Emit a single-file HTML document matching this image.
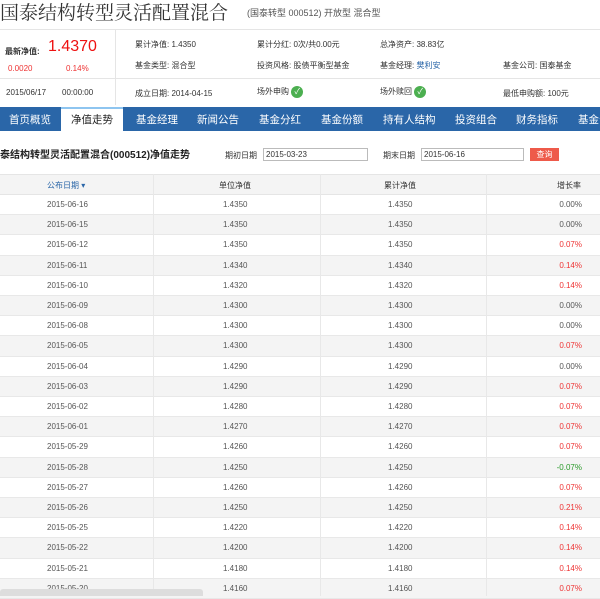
<!DOCTYPE html><html><head><meta charset="utf-8"><style>
*{margin:0;padding:0;box-sizing:border-box}
body{width:600px;height:596px;overflow:hidden;background:#fff;font-family:"Liberation Sans","Noto Sans CJK SC",sans-serif;font-size:8px;color:#333;position:relative}
.a{position:absolute;white-space:nowrap}
.nav{position:absolute;top:107px;left:0;width:600px;height:24px;background:#2a66a8;overflow:hidden}
.nav span{position:absolute;top:5px;color:#fff;font-size:10.5px;white-space:nowrap}
.row{position:absolute;left:0;width:600px;height:20.2px;border-bottom:1px solid #e8e8e8;font-size:8px;color:#555}
.row span{position:absolute;top:5px}
.g{background:#f4f4f4}
.chk{display:inline-block;width:12px;height:12px;border-radius:50%;background:#4caf50;color:#fff;font-size:8px;text-align:center;line-height:12px;vertical-align:middle}
</style></head><body>
<div class="a" style="left:0;top:-2px;font-size:19px;color:#333;font-family:'Noto Serif CJK SC',serif">国泰结构转型灵活配置混合</div>
<div class="a" style="left:247px;top:6px;font-size:9px;color:#555">(国泰转型 000512) 开放型 混合型</div>
<div class="a" style="left:0;top:29px;width:600px;height:1px;background:#e5e5e5"></div>
<div class="a" style="left:0;top:78px;width:600px;height:1px;background:#e5e5e5"></div>
<div class="a" style="left:115px;top:29px;width:1px;height:76px;background:#e5e5e5"></div>
<div class="a" style="left:5px;top:46px;font-size:8px;font-weight:bold">最新净值:</div>
<div class="a" style="left:48px;top:38px;font-size:16px;color:#e11">1.4370</div>
<div class="a" style="left:8px;top:64px;color:#e33">0.0020</div>
<div class="a" style="left:66px;top:64px;color:#e33">0.14%</div>
<div class="a" style="left:135px;top:39px">累计净值: 1.4350</div>
<div class="a" style="left:257px;top:39px">累计分红: 0次/共0.00元</div>
<div class="a" style="left:380px;top:39px">总净资产: 38.83亿</div>
<div class="a" style="left:135px;top:60px">基金类型: 混合型</div>
<div class="a" style="left:257px;top:60px">投资风格: 股债平衡型基金</div>
<div class="a" style="left:380px;top:60px">基金经理: <span style="color:#2a66a8">樊利安</span></div>
<div class="a" style="left:503px;top:60px">基金公司: 国泰基金</div>
<div class="a" style="left:6px;top:88px">2015/06/17</div>
<div class="a" style="left:62px;top:88px">00:00:00</div>
<div class="a" style="left:135px;top:88px">成立日期: 2014-04-15</div>
<div class="a" style="left:257px;top:86px">场外申购 <span class="chk">✓</span></div>
<div class="a" style="left:380px;top:86px">场外赎回 <span class="chk">✓</span></div>
<div class="a" style="left:503px;top:88px">最低申购额: 100元</div>
<div class="nav">
<span style="left:9px">首页概览</span>
<div class="a" style="left:61px;top:0;width:62px;height:24px;background:#fff;border-top:2px solid #8ec5f0"></div>
<span style="left:71px;color:#222">净值走势</span>
<span style="left:136px">基金经理</span><span style="left:197px">新闻公告</span><span style="left:259px">基金分红</span><span style="left:321px">基金份额</span><span style="left:383px">持有人结构</span><span style="left:455px">投资组合</span><span style="left:516px">财务指标</span><span style="left:578px">基金公司</span>
</div>
<div class="a" style="left:0;top:146px;font-size:10px;font-weight:bold;color:#222">泰结构转型灵活配置混合(000512)净值走势</div>
<div class="a" style="left:225px;top:150px">期初日期</div>
<div class="a" style="left:263px;top:148px;width:105px;height:13px;border:1px solid #bbb;padding:1px 2px">2015-03-23</div>
<div class="a" style="left:383px;top:150px">期末日期</div>
<div class="a" style="left:421px;top:148px;width:103px;height:13px;border:1px solid #bbb;padding:1px 2px">2015-06-16</div>
<div class="a" style="left:530px;top:148px;width:29px;height:13px;background:#ee5a4a;color:#fff;text-align:center;line-height:13px">查询</div>
<div class="a" style="left:0;top:174px;width:600px;height:21px;background:#f4f4f4;border-top:1px solid #e5e5e5;border-bottom:1px solid #e5e5e5"></div>
<div class="a" style="left:47px;top:180px;color:#2a66a8">公布日期 ▾</div>
<div class="a" style="left:219px;top:180px">单位净值</div>
<div class="a" style="left:384px;top:180px">累计净值</div>
<div class="a" style="left:557px;top:180px">增长率</div>
<div id="t"></div>
<div class="a" style="left:153px;top:174px;width:1px;height:422px;background:#e8e8e8;z-index:2"></div>
<div class="a" style="left:320px;top:174px;width:1px;height:422px;background:#e8e8e8;z-index:2"></div>
<div class="a" style="left:486px;top:174px;width:1px;height:422px;background:#e8e8e8;z-index:2"></div>
<script>
var d=["06-16","06-15","06-12","06-11","06-10","06-09","06-08","06-05","06-04","06-03","06-02","06-01","05-29","05-28","05-27","05-26","05-25","05-22","05-21","05-20"];
var n=["4350","4350","4350","4340","4320","4300","4300","4300","4290","4290","4280","4270","4260","4250","4260","4250","4220","4200","4180","4160"];
var r=["0.00","0.00","0.07","0.14","0.14","0.00","0.00","0.07","0.00","0.07","0.07","0.07","0.07","-0.07","0.07","0.21","0.14","0.14","0.14","0.07"];
var h="";for(var i=0;i<20;i++){var c=r[i]=="0.00"?"#555":(r[i][0]=="-"?"#2a9a2a":"#e33");
h+='<div class="row'+(i%2?' g':'')+'" style="top:'+(195+i*20.2)+'px"><span style="left:47px">2015-'+d[i]+'</span><span style="left:223px">1.'+n[i]+'</span><span style="left:388px">1.'+n[i]+'</span><span style="right:18px;color:'+c+'">'+r[i]+'%</span></div>';}
document.getElementById("t").innerHTML=h;
</script>
<div class="a" style="left:0;top:589px;width:203px;height:7px;background:#ddd;border-radius:3px 3px 0 0;z-index:3"></div>
</body></html>
